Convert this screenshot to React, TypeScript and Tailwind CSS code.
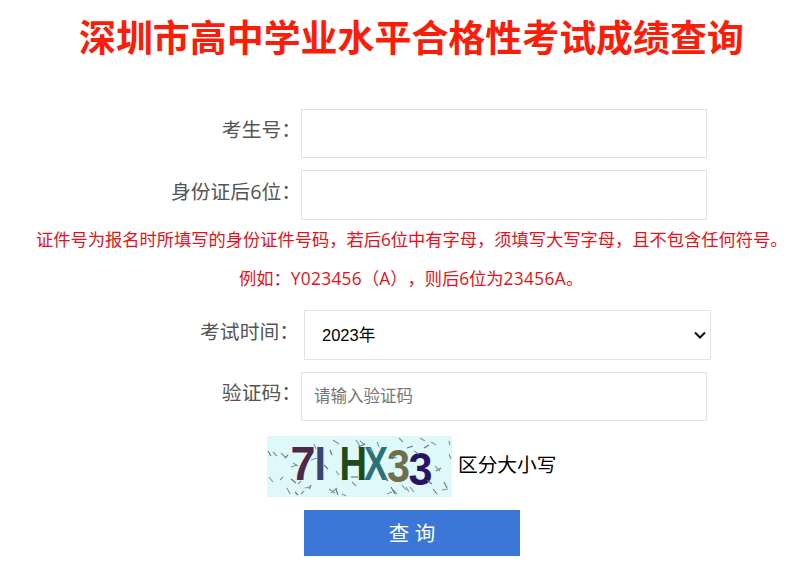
import { useState } from "react";
import type { ReactNode } from "react";

const captchaGlyphs = [
	{ char: "7", x: 23.5, y: 44, size: 48, fill: "#4f2a48", spacing: 25 },
	{ char: "I", x: 47.5, y: 44, size: 48, fill: "#3b4470", spacing: 11.5 },
	{ char: "H", x: 72.5, y: 44, size: 48, fill: "#1f4a1c", spacing: 27.5 },
	{ char: "X", x: 97, y: 44, size: 48, fill: "#2c7078", spacing: 24 },
	{ char: "3", x: 120, y: 46, size: 46, fill: "#6f6f4c", spacing: 23 },
	{ char: "3", x: 141.5, y: 49, size: 46, fill: "#2a1164", spacing: 24 },
];

// x, y, dx, dy of every noise stroke
const noiseStrokes = [
	[1, 15, 3, 5], [6, 16, 4, 4], [14, 17, 5, 5], [18, 22, 3, -3], [2, 41, 4, 5], [13, 44, 3, -3],
	[24, 43, 5, 4], [31, 48, 3, -3], [20, 52, 3, 6], [28, 56, 3, 3], [34, 58, 3, -3], [38, 52, 5, -1],
	[42, 53, 2, -4], [26, 27, 5, 3], [62, 53, 6, 4], [63, 14, 2, 5], [66, 4, 6, 4], [64, 57, 6, -5],
	[69, 53, 2, 6], [75, 58, 4, 2], [69, 35, 3, 4], [84, 41, 7, 0], [89, 4, 4, 6], [93, 5, 5, 4],
	[91, 11, 7, -3], [85, 46, 4, 4], [110, 6, 2, 5], [117, 41, 4, 4], [125, 20, 5, 2], [126, 54, 4, 4],
	[124, 51, 4, 7], [120, 58, 5, -2], [132, 2, 4, 4], [140, 12, 6, -2], [135, 49, 4, 5], [143, 51, 4, 5],
	[157, 12, 5, -3], [164, 6, 5, 3], [153, 2, 5, 3], [169, 35, 5, -3], [168, 30, 5, 5], [182, 18, 2, 5],
	[177, 46, 3, 6], [175, 54, 6, -1], [182, 5, 1, 4], [166, 53, 4, 5], [24, 31, 6, -2], [44, 24, 6, -2],
	[57, 29, 4, 4], [102, 12, 3, 4], [139, 51, 3, 5], [160, 44, 5, 4], [47, 8, 2, 5], [147, 15, 5, 3],
];

const Captcha = () => (
	<svg width="185" height="61" viewBox="0 0 185 61" className="shrink-0 bg-[#dff9fa]">
		{captchaGlyphs.map((g, i) => (
			<text key={i} x={g.x} y={g.y} fontSize={g.size} fill={g.fill} textLength={g.spacing} lengthAdjust="spacingAndGlyphs" className="font-['Liberation_Sans',sans-serif] font-bold">
				{g.char}
			</text>
		))}
		{noiseStrokes.map(([x, y, dx, dy], i) => (
			<line key={i} x1={x} y1={y} x2={x + dx} y2={y + dy} stroke={i % 3 === 0 ? "#5d7874" : "#85949a"} strokeWidth="1.1" />
		))}
	</svg>
);

const Row = ({ label, htmlFor, labelClass, children }: { label: string; htmlFor: string; labelClass: string; children: ReactNode }) => (
	<div className="flex h-[50px] items-start">
		<label htmlFor={htmlFor} className={`shrink-0 whitespace-nowrap text-right text-[19.8px] text-[#555] ${labelClass}`}>
			{label}
		</label>
		{children}
	</div>
);

const App = () => {
	const [studentNo, setStudentNo] = useState("");
	const [idTail, setIdTail] = useState("");
	const [year, setYear] = useState("2023");
	const [code, setCode] = useState("");

	return (
		<div className="h-[576px] w-[800px] overflow-hidden bg-white font-['Open_Sans','Noto_Sans_CJK_SC',sans-serif] [text-spacing-trim:space-all]">
			<h1 className="h-[109px] whitespace-nowrap pl-[79px] pt-[11px] text-[36.95px] font-bold leading-[54px] text-[#f91d0a]">深圳市高中学业水平合格性考试成绩查询</h1>

			<form onSubmit={(e) => e.preventDefault()}>
				<div className="flex flex-col gap-[11px]">
					<Row label="考生号：" htmlFor="studentNo" labelClass="w-[301px] leading-[42px]">
						<input id="studentNo" value={studentNo} onChange={(e) => setStudentNo(e.target.value)} className="h-[49px] w-[406px] border border-[#e3e3e3] px-3 outline-none" />
					</Row>
					<Row label="身份证后6位：" htmlFor="idTail" labelClass="w-[301px] leading-[43px]">
						<input id="idTail" value={idTail} onChange={(e) => setIdTail(e.target.value)} className="h-[50px] w-[406px] border border-[#e3e3e3] px-3 outline-none" />
					</Row>
				</div>

				<div className="h-[90px] whitespace-nowrap text-[17.25px] leading-[39px] text-[#e8101a]">
					<p className="pl-[36px]">证件号为报名时所填写的身份证件号码，若后6位中有字母，须填写大写字母，且不包含任何符号。</p>
					<p className="pl-[239px]">
						例如：<span className="tracking-[0.35px]">Y023456</span>（A），则后6位为<span className="tracking-[0.35px]">23456A</span>。
					</p>
				</div>

				<div className="flex flex-col gap-3">
					<Row label="考试时间：" htmlFor="year" labelClass="mr-[5px] w-[299px] leading-[43px]">
						<div className="relative">
							<select
								id="year"
								value={year}
								onChange={(e) => setYear(e.target.value)}
								className="h-[50px] w-[407px] appearance-none border border-[#e3e3e3] bg-white pl-[17px] font-['Liberation_Sans','Noto_Sans_CJK_SC',sans-serif] text-[16.5px] text-black outline-none">
								<option value="2023">2023年</option>
							</select>
							<svg width="12" height="8" viewBox="0 0 12 8" className="pointer-events-none absolute right-[5px] top-[21px]" fill="none" stroke="#111" strokeWidth="2">
								<path d="M1 1.5 L6 6.5 L11 1.5" />
							</svg>
						</div>
					</Row>
					<Row label="验证码：" htmlFor="code" labelClass="w-[301px] leading-[42px]">
						<input
							id="code"
							value={code}
							onChange={(e) => setCode(e.target.value)}
							placeholder="请输入验证码"
							className="h-[49px] w-[406px] border border-[#e3e3e3] px-3 pb-[2px] text-[16.5px] outline-none placeholder:text-[#757575]"
						/>
					</Row>
				</div>

				<div className="mt-[14px] flex items-center pl-[267px]">
					<Captcha />
					<span className="mb-[3px] ml-[6px] text-[19.7px] leading-[30px] text-black">区分大小写</span>
				</div>

				<button type="submit" className="ml-[304px] mt-[13px] block h-[46px] w-[216px] bg-[#3a77d6] text-[20.5px] leading-[47px] text-white">
					查 询
				</button>
			</form>
		</div>
	);
};

export default App;
